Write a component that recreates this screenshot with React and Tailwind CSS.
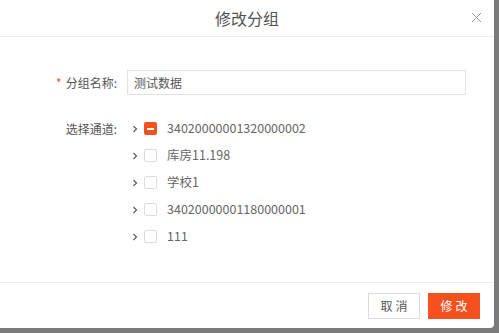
import React from "react";

const font = { fontFamily: '"Noto Sans CJK SC", "Noto Sans", sans-serif' };

function Arrow() {
  return (
    <svg width="8" height="8" viewBox="0 0 8 8" className="shrink-0">
      <path d="M2.5 1 L5.5 4 L2.5 7" fill="none" stroke="#555" strokeWidth="1.1" />
    </svg>
  );
}

function Row({ text, checked }) {
  return (
    <div className="flex items-center h-[27px]">
      <div className="w-[14px] flex justify-start pl-[1px]"><Arrow /></div>
      {checked ? (
        <div className="w-[13px] h-[13px] rounded-[2px] bg-[#f4511e] flex items-center justify-center">
          <div className="w-[7px] h-[2px] bg-white" />
        </div>
      ) : (
        <div className="w-[13px] h-[13px] rounded-[2px] border border-[#dcdcdc] bg-white" />
      )}
      <span className="ml-[10px] text-[12.5px] text-[#666]">{text}</span>
    </div>
  );
}

export default function App() {
  return (
    <div className="w-[499px] h-[333px] bg-[#7a7a7a] overflow-hidden" style={font}>
      <div className="w-[494px] h-[328px] bg-white rounded-br-[4px] flex flex-col">
        <div className="h-[37px] border-b border-[#ececec] flex items-center justify-center relative shrink-0">
          <span className="text-[16px] text-[#555]">修改分组</span>
          <svg className="absolute right-[12px] top-[12px]" width="11" height="11" viewBox="0 0 11 11">
            <path d="M1 1 L10 10 M10 1 L1 10" stroke="#9a9a9a" strokeWidth="1" />
          </svg>
        </div>
        <div className="flex-1 pt-[33px]">
          <div className="flex items-center h-[25px]">
            <div className="w-[120px] flex justify-end pr-[3px] text-[12px] text-[#555]">
              <span className="text-[#f4511e] mr-[4px]">*</span>分组名称:
            </div>
            <div className="ml-[7px] w-[339px] h-[25px] border border-[#e2e2e2] flex items-center pl-[6px] text-[12px] text-[#555]">
              测试数据
            </div>
          </div>
          <div className="flex mt-[20px]">
            <div className="w-[120px] flex justify-end pr-[3px] text-[12px] text-[#555] h-[27px] items-center">
              选择通道:
            </div>
            <div className="ml-[10px] flex flex-col">
              <Row text="34020000001320000002" checked />
              <Row text="库房11.198" />
              <Row text="学校1" />
              <Row text="34020000001180000001" />
              <Row text="111" />
            </div>
          </div>
        </div>
        <div className="h-[46px] border-t border-[#ececec] flex items-start justify-end pr-[14px] pt-[10px] gap-[8px] shrink-0">
          <button className="w-[52px] h-[26px] border border-[#dcdcdc] bg-white text-[12px] text-[#555] tracking-[3px] pl-[3px]">取消</button>
          <button className="w-[52px] h-[26px] bg-[#f4511e] text-[12px] text-white tracking-[3px] pl-[3px]">修改</button>
        </div>
      </div>
    </div>
  );
}
